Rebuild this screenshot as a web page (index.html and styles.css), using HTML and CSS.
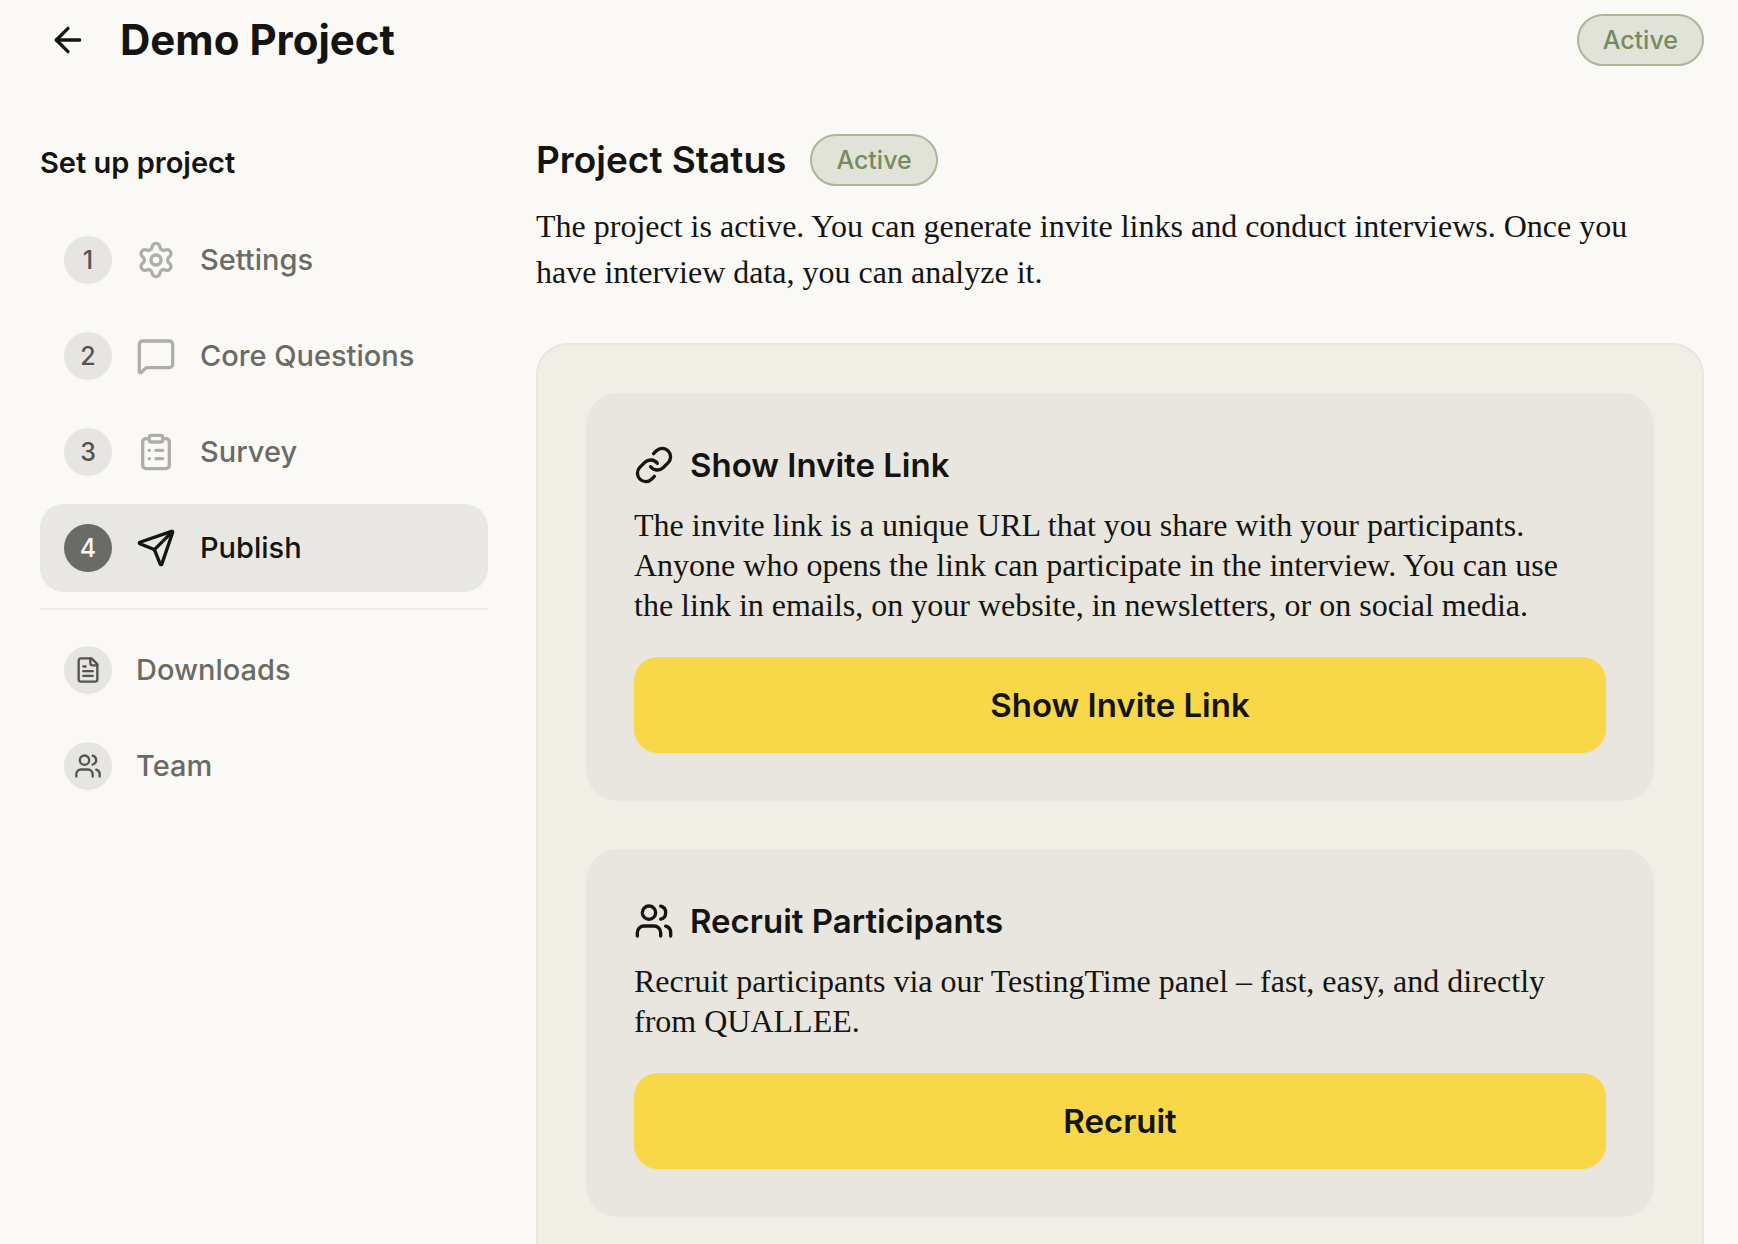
FILE: index.html
```html
<!DOCTYPE html>
<html lang="en">
<head>
    <meta charset="UTF-8">
    <meta name="viewport" content="width=device-width, initial-scale=1.0">
    <title>Demo Project</title>
    <link rel="stylesheet" href="styles.css">
</head>
<body>
    <header class="topbar">
        <button class="back" type="button" aria-label="Back">
            <svg class="icon" viewBox="0 0 24 24"><path d="m12 19-7-7 7-7"/><path d="M19 12H5"/></svg>
        </button>
        <h1>Demo Project</h1>
        <span class="badge">Active</span>
    </header>

    <div class="layout">
        <nav class="sidebar">
            <h2>Set up project</h2>
            <a class="nav-item" href="#settings">
                <span class="step">1</span>
                <svg class="icon" viewBox="0 0 24 24"><path d="M9.671 4.136a2.34 2.34 0 0 1 4.659 0 2.34 2.34 0 0 0 3.319 1.915 2.34 2.34 0 0 1 2.33 4.033 2.34 2.34 0 0 0 0 3.831 2.34 2.34 0 0 1-2.33 4.033 2.34 2.34 0 0 0-3.319 1.915 2.34 2.34 0 0 1-4.659 0 2.34 2.34 0 0 0-3.32-1.915 2.34 2.34 0 0 1-2.33-4.033 2.34 2.34 0 0 0 0-3.831A2.34 2.34 0 0 1 6.35 6.051a2.34 2.34 0 0 0 3.319-1.915"/><circle cx="12" cy="12" r="3"/></svg>
                <span>Settings</span>
            </a>
            <a class="nav-item" href="#questions">
                <span class="step">2</span>
                <svg class="icon" viewBox="0 0 24 24"><path d="M22 17a2 2 0 0 1-2 2H6.828a2 2 0 0 0-1.414.586l-2.202 2.202A.71.71 0 0 1 2 21.286V5a2 2 0 0 1 2-2h16a2 2 0 0 1 2 2z"/></svg>
                <span>Core Questions</span>
            </a>
            <a class="nav-item" href="#survey">
                <span class="step">3</span>
                <svg class="icon" viewBox="0 0 24 24"><rect x="8" y="2" width="8" height="4" rx="1"/><path d="M16 4h2a2 2 0 0 1 2 2v14a2 2 0 0 1-2 2H6a2 2 0 0 1-2-2V6a2 2 0 0 1 2-2h2"/><path d="M12 11h4"/><path d="M12 16h4"/><path d="M8 11h.01"/><path d="M8 16h.01"/></svg>
                <span>Survey</span>
            </a>
            <a class="nav-item active" href="#publish" aria-current="page">
                <span class="step">4</span>
                <svg class="icon" viewBox="0 0 24 24"><path d="M14.536 21.686a.5.5 0 0 0 .937-.024l6.5-19a.496.496 0 0 0-.635-.635l-19 6.5a.5.5 0 0 0-.024.937l7.93 3.18a2 2 0 0 1 1.112 1.11z"/><path d="m21.854 2.147-10.94 10.939"/></svg>
                <span>Publish</span>
            </a>
            <hr>
            <a class="nav-item" href="#downloads">
                <span class="step">
                    <svg class="icon small" viewBox="0 0 24 24"><path d="M15 2H6a2 2 0 0 0-2 2v16a2 2 0 0 0 2 2h12a2 2 0 0 0 2-2V7Z"/><path d="M14 2v4a2 2 0 0 0 2 2h4"/><path d="M10 9H8"/><path d="M16 13H8"/><path d="M16 17H8"/></svg>
                </span>
                <span>Downloads</span>
            </a>
            <a class="nav-item" href="#team">
                <span class="step">
                    <svg class="icon small" viewBox="0 0 24 24"><path d="M16 21v-2a4 4 0 0 0-4-4H6a4 4 0 0 0-4 4v2"/><circle cx="9" cy="7" r="4"/><path d="M22 21v-2a4 4 0 0 0-3-3.87"/><path d="M16 3.13a4 4 0 0 1 0 7.75"/></svg>
                </span>
                <span>Team</span>
            </a>
        </nav>

        <main>
            <div class="status">
                <h2>Project Status</h2>
                <span class="badge">Active</span>
            </div>
            <p class="intro">The project is active. You can generate invite links and conduct interviews. Once you have interview data, you can analyze it.</p>

            <div class="panel">
                <section class="card">
                    <h3>
                        <svg class="icon" viewBox="0 0 24 24"><path d="M10 13a5 5 0 0 0 7.54.54l3-3a5 5 0 0 0-7.07-7.07l-1.72 1.71"/><path d="M14 11a5 5 0 0 0-7.54-.54l-3 3a5 5 0 0 0 7.07 7.07l1.71-1.71"/></svg>
                        Show Invite Link
                    </h3>
                    <p>The invite link is a unique URL that you share with your participants. Anyone who opens the link can participate in the interview. You can use the link in emails, on your website, in newsletters, or on social media.</p>
                    <button class="primary" type="button">Show Invite Link</button>
                </section>

                <section class="card">
                    <h3>
                        <svg class="icon" viewBox="0 0 24 24"><path d="M16 21v-2a4 4 0 0 0-4-4H6a4 4 0 0 0-4 4v2"/><circle cx="9" cy="7" r="4"/><path d="M22 21v-2a4 4 0 0 0-3-3.87"/><path d="M16 3.13a4 4 0 0 1 0 7.75"/></svg>
                        Recruit Participants
                    </h3>
                    <p>Recruit participants via our TestingTime panel – fast, easy, and directly from QUALLEE.</p>
                    <button class="primary" type="button">Recruit</button>
                </section>
            </div>
        </main>
    </div>
</body>
</html>
```
FILE: styles.css
```css
* {
    box-sizing: border-box;
}

body {
    margin: 0;
    background-color: #faf9f5;
    color: #141412;
    font-family: Inter, sans-serif;
    font-size: 29px;
}

h1, h2, h3, p {
    margin: 0;
}

button {
    border: none;
    color: inherit;
    font-family: inherit;
    cursor: pointer;
}

.icon {
    width: 40px;
    height: 40px;
    flex-shrink: 0;
    fill: none;
    stroke: currentColor;
    stroke-width: 2;
    stroke-linecap: round;
    stroke-linejoin: round;
}

.icon.small {
    width: 28px;
    height: 28px;
}

.topbar {
    display: flex;
    align-items: center;
    padding: 12px 34px 12px 40px;
}

.topbar h1 {
    flex: 1;
    margin-left: 24px;
    font-size: 42px;
    font-weight: 700;
    line-height: 52px;
}

.back {
    display: flex;
    align-items: center;
    justify-content: center;
    width: 56px;
    height: 56px;
    padding: 0;
    background: none;
}

.badge {
    padding: 0 24px;
    border: 2px solid #adb598;
    border-radius: 26px;
    background-color: #e1e3d8;
    color: #778b5f;
    font-size: 25px;
    font-weight: 500;
    line-height: 48px;
}

.layout {
    display: grid;
    grid-template-columns: 448px 1fr;
    gap: 48px;
    padding: 54px 34px 48px 40px;
}

.sidebar {
    display: flex;
    flex-direction: column;
    gap: 8px;
}

.sidebar h2 {
    margin-bottom: 16px;
    font-size: 29px;
    font-weight: 600;
    line-height: 58px;
}

.sidebar hr {
    width: 100%;
    margin: 8px 0;
    border: none;
    border-top: 2px solid #efeee6;
}

.nav-item {
    display: flex;
    align-items: center;
    gap: 24px;
    height: 88px;
    padding: 0 24px;
    border-radius: 24px;
    color: #6a6b65;
    font-weight: 500;
    line-height: 40px;
    text-decoration: none;
}

.nav-item > .icon {
    color: #afaea6;
}

.step {
    display: flex;
    align-items: center;
    justify-content: center;
    width: 48px;
    height: 48px;
    border-radius: 50%;
    background-color: #e6e5e3;
    color: #55544f;
    font-size: 25px;
}

.nav-item.active {
    background-color: #e8e7e3;
    color: #141412;
}

.active > .icon {
    color: #141412;
}

.active .step {
    background-color: #6a6b65;
    color: #faf9f5;
}

.status {
    display: flex;
    align-items: center;
    gap: 24px;
}

.status h2 {
    font-size: 37px;
    font-weight: 600;
    line-height: 50px;
}

.intro, .card p {
    padding-right: 24px;
    font-family: "Liberation Serif", serif;
    font-size: 32px;
}

.intro {
    margin: 17px 0 48px;
    line-height: 46px;
}

.panel {
    display: flex;
    flex-direction: column;
    gap: 48px;
    padding: 48px 48px 96px;
    border: 2px solid #e8e6de;
    border-radius: 32px;
    background-color: #f1eee6;
}

.card {
    padding: 48px;
    border-radius: 32px;
    background-color: #e8e6de;
}

.card h3 {
    display: flex;
    align-items: center;
    gap: 16px;
    margin-bottom: 16px;
    font-size: 33px;
    font-weight: 600;
    line-height: 48px;
}

.card p {
    margin-bottom: 32px;
    line-height: 40px;
}

.primary {
    width: 100%;
    height: 96px;
    border-radius: 24px;
    background-color: #f8d748;
    font-size: 33px;
    font-weight: 600;
}

.primary:hover {
    background-color: #f2cf3a;
}
```
